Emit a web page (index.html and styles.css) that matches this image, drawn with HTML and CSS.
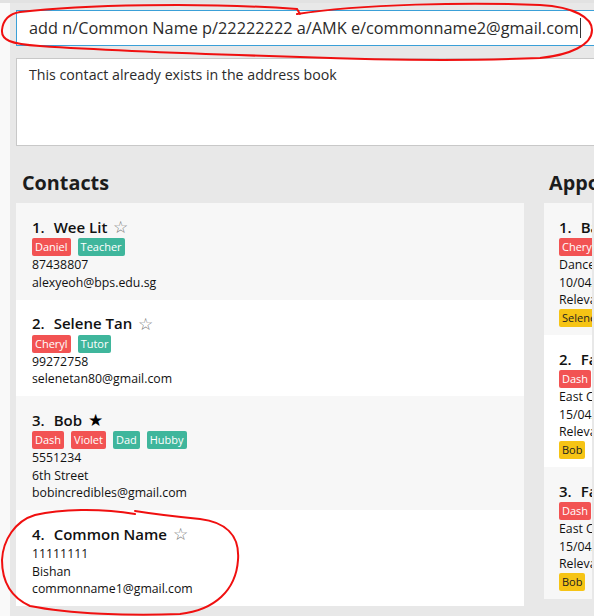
FILE: index.html
```html
<!DOCTYPE html>
<html>
<head>
<meta charset="utf-8">
<link rel="stylesheet" href="styles.css">
</head>
<body>
<div class="topbar"></div>
<div class="app">
  <div class="edge"></div>
  <div class="main">
    <div class="command">add n/Common Name p/22222222 a/AMK e/commonname2@gmail.com<span class="caret"></span></div>
    <div class="result">This contact already exists in the address book</div>
    <div class="panels">
      <section class="col contacts">
        <h2 class="heading">Contacts</h2>
        <div class="list">
          <div class="card alt">
            <div class="title"><span class="num">1.</span><span class="name">Wee Lit</span><span class="star">☆</span></div>
            <div class="tags"><span class="tag red">Daniel</span><span class="tag teal">Teacher</span></div>
            <div class="line">87438807</div>
            <div class="line">alexyeoh@bps.edu.sg</div>
          </div>
          <div class="card">
            <div class="title"><span class="num">2.</span><span class="name">Selene Tan</span><span class="star">☆</span></div>
            <div class="tags"><span class="tag red">Cheryl</span><span class="tag teal">Tutor</span></div>
            <div class="line">99272758</div>
            <div class="line">selenetan80@gmail.com</div>
          </div>
          <div class="card alt">
            <div class="title"><span class="num">3.</span><span class="name">Bob</span><span class="star filled">★</span></div>
            <div class="tags"><span class="tag red">Dash</span><span class="tag red">Violet</span><span class="tag teal">Dad</span><span class="tag teal">Hubby</span></div>
            <div class="line">5551234</div>
            <div class="line">6th Street</div>
            <div class="line">bobincredibles@gmail.com</div>
          </div>
          <div class="card">
            <div class="title"><span class="num">4.</span><span class="name">Common Name</span><span class="star">☆</span></div>
            <div class="line">11111111</div>
            <div class="line">Bishan</div>
            <div class="line">commonname1@gmail.com</div>
          </div>
        </div>
      </section>
      <section class="col appts">
        <h2 class="heading">Appointments</h2>
        <div class="list clip">
          <div class="card alt">
            <div class="title"><span class="num">1.</span><span class="name">Ballet Recital</span></div>
            <div class="tags"><span class="tag red">Cheryl</span></div>
            <div class="line">Dance Studio</div>
            <div class="line">10/04/2024 1500</div>
            <div class="line">Relevant contacts:</div>
            <div class="tags"><span class="tag yellow">Selene Tan</span></div>
          </div>
          <div class="card">
            <div class="title"><span class="num">2.</span><span class="name">Family Dinner</span></div>
            <div class="tags"><span class="tag red">Dash</span></div>
            <div class="line">East Coast Park</div>
            <div class="line">15/04/2024 1800</div>
            <div class="line">Relevant contacts:</div>
            <div class="tags"><span class="tag yellow">Bob</span></div>
          </div>
          <div class="card alt">
            <div class="title"><span class="num">3.</span><span class="name">Family Picnic</span></div>
            <div class="tags"><span class="tag red">Dash</span></div>
            <div class="line">East Coast Park</div>
            <div class="line">15/04/2024 1200</div>
            <div class="line">Relevant contacts:</div>
            <div class="tags"><span class="tag yellow">Bob</span></div>
          </div>
        </div>
      </section>
    </div>
  </div>
</div>
<svg class="marks" width="594" height="616" viewBox="0 0 594 616">
  <path d="M297,14 C360,4 470,2 540,5 C575,7 592,18 592,30 C592,45 570,55 540,58 C470,61 380,60 300,57 C200,54 100,50 40,46 C10,44 1,40 2,30 C3,20 8,14 20,12 C80,5 200,2 297,9 L300,14"/>
  <path d="M135,514 C100,508 60,509 35,515 C15,521 3,540 2,560 C2,578 8,596 30,606 C70,614 130,616 180,614 C215,610 236,590 238,560 C240,535 225,522 200,519 C180,517 160,515 135,511"/>
</svg>
</body>
</html>
```

FILE: styles.css
```css
* { box-sizing: border-box; }
html, body {
  margin: 0;
  padding: 0;
}
body {
  width: 594px;
  height: 616px;
  overflow: hidden;
  position: relative;
  background: #e8e8e8;
  font-family: "Open Sans", "Noto Sans", sans-serif;
  color: #000;
}
.topbar {
  height: 3px;
  background: #e2e2e2;
}
.app {
  display: flex;
  height: 613px;
}
.edge {
  width: 10px;
  flex: none;
  background: #f9f9f9;
}
.main {
  flex: none;
  width: 620px;
  padding: 7px 0 0 6px;
}
.command {
  height: 36px;
  background: #fff;
  border: 1px solid #3aa0d8;
  font-size: 16.3px;
  line-height: 34px;
  padding-left: 12px;
  color: #2b2b2b;
  white-space: nowrap;
}
.caret {
  display: inline-block;
  width: 1px;
  height: 20px;
  background: #333;
  vertical-align: -4px;
  margin-left: 1px;
}
.result {
  margin-top: 12px;
  height: 88px;
  background: #fff;
  border: 1px solid #c8c8c8;
  font-size: 14.2px;
  line-height: 18px;
  padding: 7px 12px;
  color: #2b2b2b;
}
.panels {
  display: flex;
  gap: 20px;
}
.col { flex: none; }
.contacts { width: 508px; }
.appts { width: 48px; }
.heading {
  margin: 22px 0 5px 6px;
  height: 30px;
  font-size: 19.8px;
  line-height: 30px;
  font-weight: 700;
  color: #1c1c1c;
  white-space: nowrap;
}
.appts .heading { margin-left: 5px; }
.list { background: #e8e8e8; }
.clip { overflow: hidden; }
.card {
  background: #fff;
  padding: 12px 0 8.5px 16px;
  white-space: nowrap;
}
.appts .card { padding-left: 15px; }
.card.alt { background: #f7f7f7; }
.title {
  display: flex;
  align-items: center;
  height: 23px;
  font-size: 15px;
  font-weight: 600;
  color: #111;
}
.num { margin-right: 9px; }
.star {
  margin-left: 6px;
  font-size: 17px;
  font-weight: 400;
  color: #777;
}
.star.filled { color: #000; }
.tags {
  display: flex;
  gap: 7px;
  height: 18px;
}
.tag {
  height: 18px;
  line-height: 18px;
  padding: 0 3px;
  border-radius: 2px;
  font-size: 11px;
  color: #fff;
}
.tag.red { background: #f25353; }
.tag.teal { background: #3fb69c; }
.tag.yellow { background: #f6c415; color: #222; }
.line {
  font-size: 12.3px;
  line-height: 17.5px;
  color: #111;
}
.marks {
  position: absolute;
  left: 0;
  top: 0;
  pointer-events: none;
}
.marks path {
  fill: none;
  stroke: #f01010;
  stroke-width: 2;
  stroke-linecap: round;
}
```
